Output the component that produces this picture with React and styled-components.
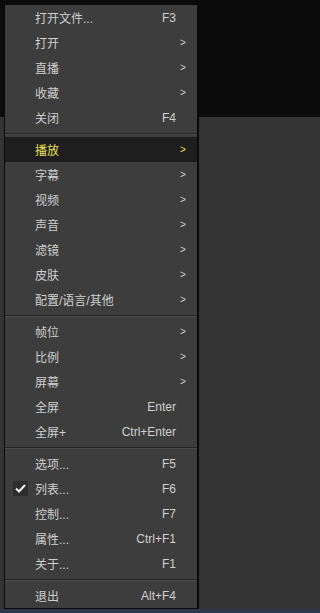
import React from 'react';
import styled, { createGlobalStyle } from 'styled-components';

const groups = [
  [
    { label: '打开文件...', key: 'F3' },
    { label: '打开', sub: true },
    { label: '直播', sub: true },
    { label: '收藏', sub: true },
    { label: '关闭', key: 'F4' },
  ],
  [
    { label: '播放', sub: true, active: true },
    { label: '字幕', sub: true },
    { label: '视频', sub: true },
    { label: '声音', sub: true },
    { label: '滤镜', sub: true },
    { label: '皮肤', sub: true },
    { label: '配置/语言/其他', sub: true },
  ],
  [
    { label: '帧位', sub: true },
    { label: '比例', sub: true },
    { label: '屏幕', sub: true },
    { label: '全屏', key: 'Enter' },
    { label: '全屏+', key: 'Ctrl+Enter' },
  ],
  [
    { label: '选项...', key: 'F5' },
    { label: '列表...', key: 'F6', checked: true },
    { label: '控制...', key: 'F7' },
    { label: '属性...', key: 'Ctrl+F1' },
    { label: '关于...', key: 'F1' },
  ],
  [{ label: '退出', key: 'Alt+F4' }],
];

export default function App() {
  return (
    <>
      <GlobalStyle />
      <Stage>
        <Menu>
          {groups.map((group, gi) => (
            <React.Fragment key={gi}>
              {gi > 0 && <Separator />}
              {group.map((item) => (
                <Item key={item.label} $active={item.active}>
                  <CheckCell>
                    {item.checked && (
                      <CheckBox>
                        <svg width="11" height="9" viewBox="0 0 11 9">
                          <path d="M1 4.5 L4 7.5 L10 1" fill="none" stroke="#f2f2f2" strokeWidth="2" />
                        </svg>
                      </CheckBox>
                    )}
                  </CheckCell>
                  <Label>{item.label}</Label>
                  <Shortcut>{item.key}</Shortcut>
                  <Arrow>{item.sub ? '>' : ''}</Arrow>
                </Item>
              ))}
            </React.Fragment>
          ))}
        </Menu>
      </Stage>
    </>
  );
}

const GlobalStyle = createGlobalStyle`
  html, body {
    margin: 0;
    padding: 0;
  }
  body {
    width: 202px;
    height: 613px;
    overflow: hidden;
    background: linear-gradient(to bottom, #0b0b0b 117px, #343434 117px, #343434 609px, #2a3a4c 609px);
    font-family: "Liberation Sans", "Noto Sans CJK SC", sans-serif;
  }
`;

const Stage = styled.div`
  padding: 4px 0 0 4px;
`;

const Menu = styled.div`
  width: 192px;
  background: #3d3d3d;
  border: 1px solid #0a0a0a;
  border-right: 2px solid #0a0a0a;
  display: flex;
  flex-direction: column;
`;

const Separator = styled.div`
  height: 7px;
  display: flex;
  flex-direction: column;
  justify-content: center;

  &::before {
    content: '';
    height: 1px;
    background: #252525;
  }
  &::after {
    content: '';
    height: 1px;
    background: #4a4a4a;
  }
`;

const Item = styled.div`
  height: 25px;
  display: flex;
  align-items: center;
  font-size: 12px;
  color: ${(p) => (p.$active ? '#ece255' : '#cfcfcf')};
  background: ${(p) => (p.$active ? '#1e1e1e' : 'transparent')};
`;

const CheckCell = styled.div`
  width: 30px;
  display: flex;
  justify-content: flex-end;
`;

const CheckBox = styled.div`
  width: 15px;
  height: 15px;
  margin-right: 7px;
  background: #2e2e2e;
  display: flex;
  align-items: center;
  justify-content: center;
`;

const Label = styled.div`
  flex: 1;
  white-space: nowrap;
`;

const Shortcut = styled.div`
  white-space: nowrap;
  text-align: right;
`;

const Arrow = styled.div`
  width: 21px;
  padding-left: 4px;
  box-sizing: border-box;
  font-size: 10px;
  line-height: 1;
`;
